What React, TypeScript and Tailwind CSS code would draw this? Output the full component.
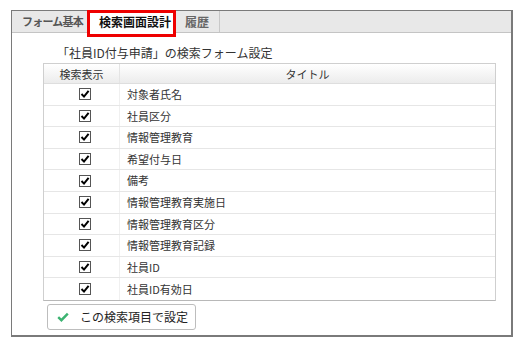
import React from "react";

const rows = [
  "対象者氏名",
  "社員区分",
  "情報管理教育",
  "希望付与日",
  "備考",
  "情報管理教育実施日",
  "情報管理教育区分",
  "情報管理教育記録",
  "社員ID",
  "社員ID有効日",
];

function Box() {
  return (
    <span className="inline-flex h-[12px] w-[12px] items-center justify-center border border-[#555] bg-white">
      <svg width="10" height="10" viewBox="0 0 10 10">
        <path d="M1.5 5 L4 7.6 L8.6 1.8" fill="none" stroke="#000" strokeWidth="2" />
      </svg>
    </span>
  );
}

export default function App() {
  return (
    <div
      className="h-[352px] w-[531px] bg-white pl-[11px] pt-[10px] text-[#333]"
      style={{ fontFamily: '"Noto Sans CJK JP", "Noto Sans", sans-serif' }}
    >
      <div className="flex h-[327px] w-[502px] flex-col border-l border-t border-r-2 border-b-2 border-[#7a7a7a] bg-white">
        {/* tab bar */}
        <div className="flex h-[22px] shrink-0 border-b border-[#c4c4c4] bg-[#e8e8e8] text-[12px] leading-[21px]">
          <div className="w-[76px] whitespace-nowrap border-r border-[#c8c8c8] pl-[10px] text-[11px] font-semibold tracking-[-0.8px] text-[#555]">
            フォーム基本
          </div>
          <div className="relative h-[22px] w-[87px] whitespace-nowrap bg-white pl-[11px] font-bold text-[#111]">
            検索画面設計
            <div className="absolute -left-[1px] -top-[1px] h-[27px] w-[89px] border-[3px] border-[#ee0000]" />
          </div>
          <div className="w-[45px] whitespace-nowrap border-r border-[#c8c8c8] pl-[10px] font-semibold text-[#666]">履歴</div>
        </div>

        {/* caption */}
        <div className="pl-[45px] pt-[11px] text-[12px] leading-[17px] text-[#333]">
          「社員ID付与申請」の検索フォーム設定
        </div>

        {/* table */}
        <div className="ml-[31px] mt-[2px] w-[453px] border border-[#cfcfcf] border-b-[#b8b8b8] text-[11px]">
          <div className="flex h-[20px] border-b border-[#dedede] bg-gradient-to-b from-white to-[#ececec] leading-[20px]">
            <div className="w-[76px] border-r border-[#e4e4e4] text-center">検索表示</div>
            <div className="flex-1 text-center">タイトル</div>
          </div>
          {rows.map((r, i) => (
            <div
              key={r}
              className={
                "flex h-[21.6px] items-center " + (i < rows.length - 1 ? "border-b border-[#e6e6e6]" : "")
              }
            >
              <div className="flex h-full w-[76px] items-center justify-center border-r border-[#f0f0f0] pl-[7px]">
                <Box />
              </div>
              <div className="flex-1 pl-[7px]">{r}</div>
            </div>
          ))}
        </div>

        {/* button */}
        <div className="ml-[35px] mt-[3px]">
          <button className="flex h-[26px] w-[149px] items-center rounded-[3px] border border-[#bdbdbd] bg-white pl-[9px] text-[12px] text-[#222]">
            <svg width="12" height="10" viewBox="0 0 12 10" className="mr-[11px]">
              <path d="M1.2 5.2 L4.4 8.2 L10.8 1.6" fill="none" stroke="#3cb371" strokeWidth="2.4" />
            </svg>
            この検索項目で設定
          </button>
        </div>
      </div>
    </div>
  );
}
